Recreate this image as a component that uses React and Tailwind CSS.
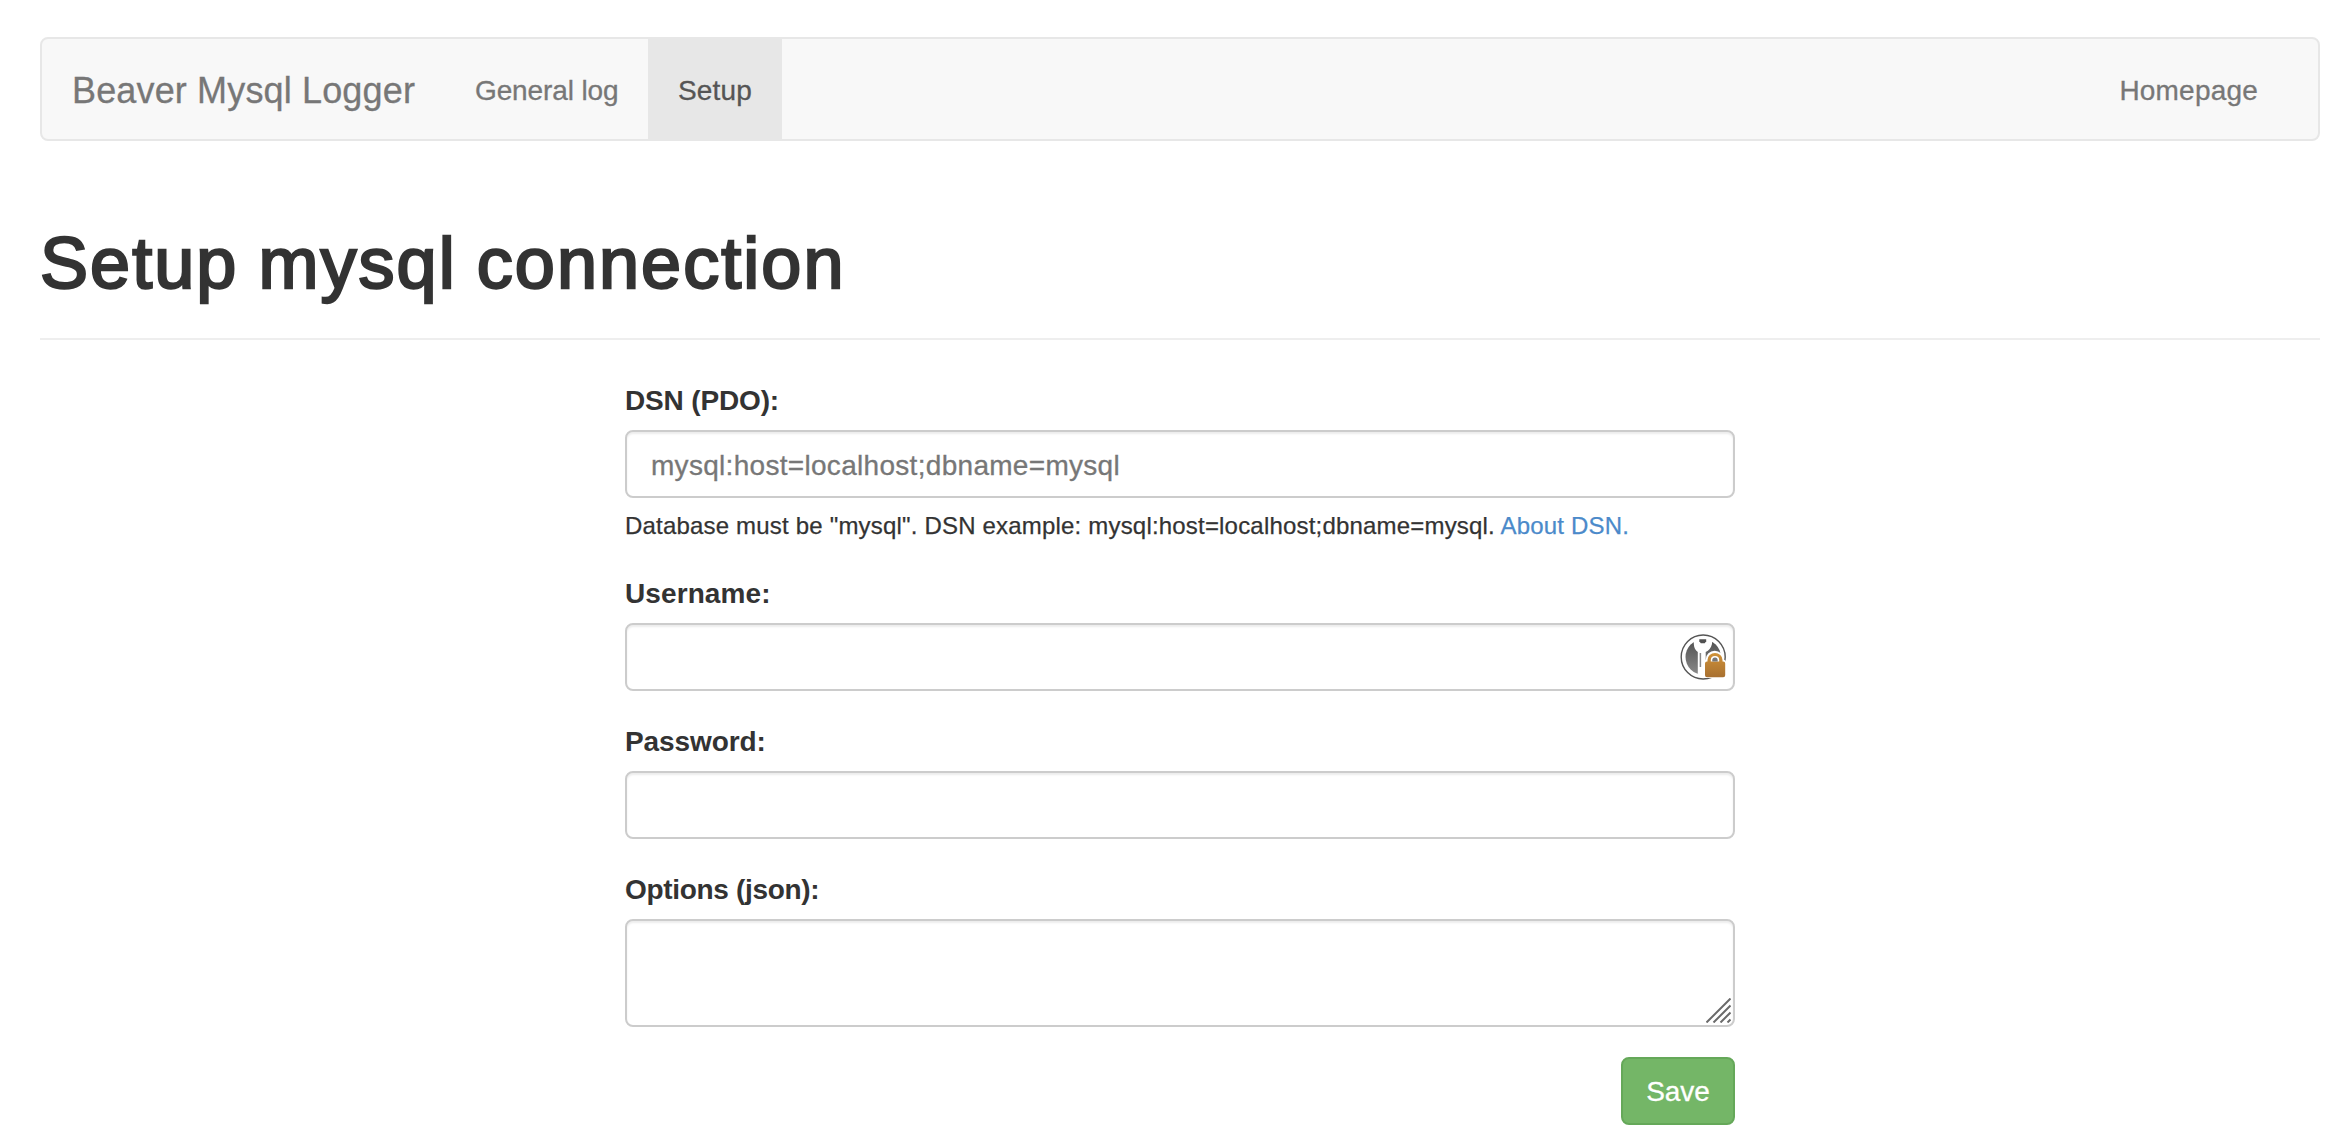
const inputClass =
  "block w-full h-[68px] rounded-[8px] border-2 border-[#cccccc] bg-white px-6 pt-[3px] text-[28px] leading-10 tracking-[0.3px] text-[#555555] outline-none placeholder:text-[#777777] placeholder:opacity-100 shadow-[inset_0_2px_2px_rgba(0,0,0,0.075)]";

function Label({ children, tracking = "" }) {
  return (
    <label className={"block h-10 mb-[10px] pt-px text-[28px] leading-10 font-bold whitespace-nowrap " + tracking}>
      {children}
    </label>
  );
}

function KeyLockIcon() {
  return (
    <svg className="absolute right-[5px] top-[9px]" width="50" height="50" viewBox="0 0 50 50">
      <defs>
        <linearGradient id="disc" x1="0" y1="0" x2="0" y2="1">
          <stop offset="0" stopColor="#505050" />
          <stop offset="1" stopColor="#8a8a8a" />
        </linearGradient>
        <linearGradient id="lock" x1="0" y1="0" x2="0" y2="1">
          <stop offset="0" stopColor="#d09238" />
          <stop offset="1" stopColor="#a87030" />
        </linearGradient>
      </defs>
      <circle cx="23.2" cy="25" r="17.700" fill="url(#disc)" />
      <path d="M13.800 5V12c.3 4 1.500 6.300 4 8V41.500l2.500 2.500h5.400V20c3.200-1.500 5.300-4 6.300-8V5z" fill="#fff" />
      <circle cx="23.2" cy="25" r="22" fill="none" stroke="#555" strokeWidth="1.400" />
      <path d="M19.300 7.300h6.900v2l-1.500 2h-3.900l-1.500-2z" fill="#505050" />
      <path d="M20.400 21V35" stroke="#888" strokeWidth="1.500" />
      <path d="M23.800 46V30q0-2 2-2.500a8.900 8.700 0 0 1 17.800 0q2.500.5 2.500 2.500V46z" fill="#fff" />
      <path
        fillRule="evenodd"
        d="M27.500 29.500V28a7.500 7 0 0 1 15 0v1.500h.7q2 0 2 2v11.700q0 2-2 2H27q-2 0-2-2V31.500q0-2 2-2zM30.800 29.500h8.400V28a4.200 3.900 0 0 0-8.400 0z"
        fill="url(#lock)"
      />
      <path d="M32.300 29.500v-1.300a2.700 2.600 0 0 1 5.400 0v1.300z" fill="#777" />
    </svg>
  );
}

export default function App() {
  return (
    <div className="min-h-[1142px] bg-white pl-10 pr-[30px] pt-[37px] text-[#333333] font-['Liberation_Sans',Arial,sans-serif]">
      <nav className="flex h-[104px] items-stretch rounded-[8px] border-2 border-[#e7e7e7] bg-[#f8f8f8] text-[28px] leading-10 text-[#777777] [-webkit-text-stroke:0.3px_currentColor]">
        <a className="flex w-[403px] items-center pl-[30px] pt-[4px] text-[36px] tracking-[0.15px] whitespace-nowrap">Beaver Mysql Logger</a>
        <a className="flex w-[203px] items-center pl-[30px] pt-[4px] tracking-[-0.12px] whitespace-nowrap">General log</a>
        <a className="flex w-[134px] items-center justify-center bg-[#e7e7e7] pt-[4px] tracking-[0.2px] text-[#555555]">Setup</a>
        <a className="ml-auto mr-[30px] flex items-center px-[30px] pt-[4px] tracking-[0.2px]">Homepage</a>
      </nav>

      <h1 className="mt-[82px] h-[117px] border-b-2 border-[#eeeeee] text-[72px] leading-[80px] tracking-[2.05px] [word-spacing:-2px] whitespace-nowrap [-webkit-text-stroke:2.4px_#333333]">
        Setup mysql connection
      </h1>

      <form className="mx-auto mt-10 flex w-[1110px] flex-col">
        <Label tracking="tracking-[-0.15px]">DSN (PDO):</Label>
        <input className={inputClass + " [-webkit-text-stroke:0.3px_#777777]"} placeholder="mysql:host=localhost;dbname=mysql" />
        <p className="h-[75px] pt-[11px] text-[24px] leading-[34px] tracking-[0.19px] whitespace-nowrap [-webkit-text-stroke:0.25px_currentColor]">
          Database must be "mysql". DSN example: mysql:host=localhost;dbname=mysql.{" "}
          <a className="text-[#4b8aca]">About DSN.</a>
        </p>
        <Label tracking="tracking-[0.1px]">Username:</Label>
        <div className="relative mb-[30px]">
          <input className={inputClass} />
          <KeyLockIcon />
        </div>
        <Label tracking="tracking-[-0.1px]">Password:</Label>
        <input type="password" className={inputClass + " mb-[30px]"} />
        <Label tracking="tracking-[-0.32px]">Options (json):</Label>
        <div className="relative mb-[30px] h-[108px]">
          <textarea className="block h-[108px] w-full resize-none rounded-[8px] border-2 border-[#cccccc] bg-white px-6 py-3 text-[28px] outline-none shadow-[inset_0_2px_2px_rgba(0,0,0,0.075)]" />
          <svg className="absolute right-[4px] bottom-[4px]" width="25" height="25" viewBox="0 0 25 25" stroke="#6a6a6a" strokeWidth="2">
            <path d="M0.500 24.500L24.500 0.500M7.500 24.500L24.500 7.500M14.500 24.500L24.500 14.500M21.500 24.500L24.500 21.500" />
          </svg>
        </div>
        <button type="button" className="h-[68px] w-[114px] self-end rounded-[8px] border-2 border-[#65a859] bg-[#74b667] pt-px text-[28px] leading-10 tracking-[-0.1px] text-white [-webkit-text-stroke:0.3px_#ffffff]">
          Save
        </button>
      </form>
    </div>
  );
}
